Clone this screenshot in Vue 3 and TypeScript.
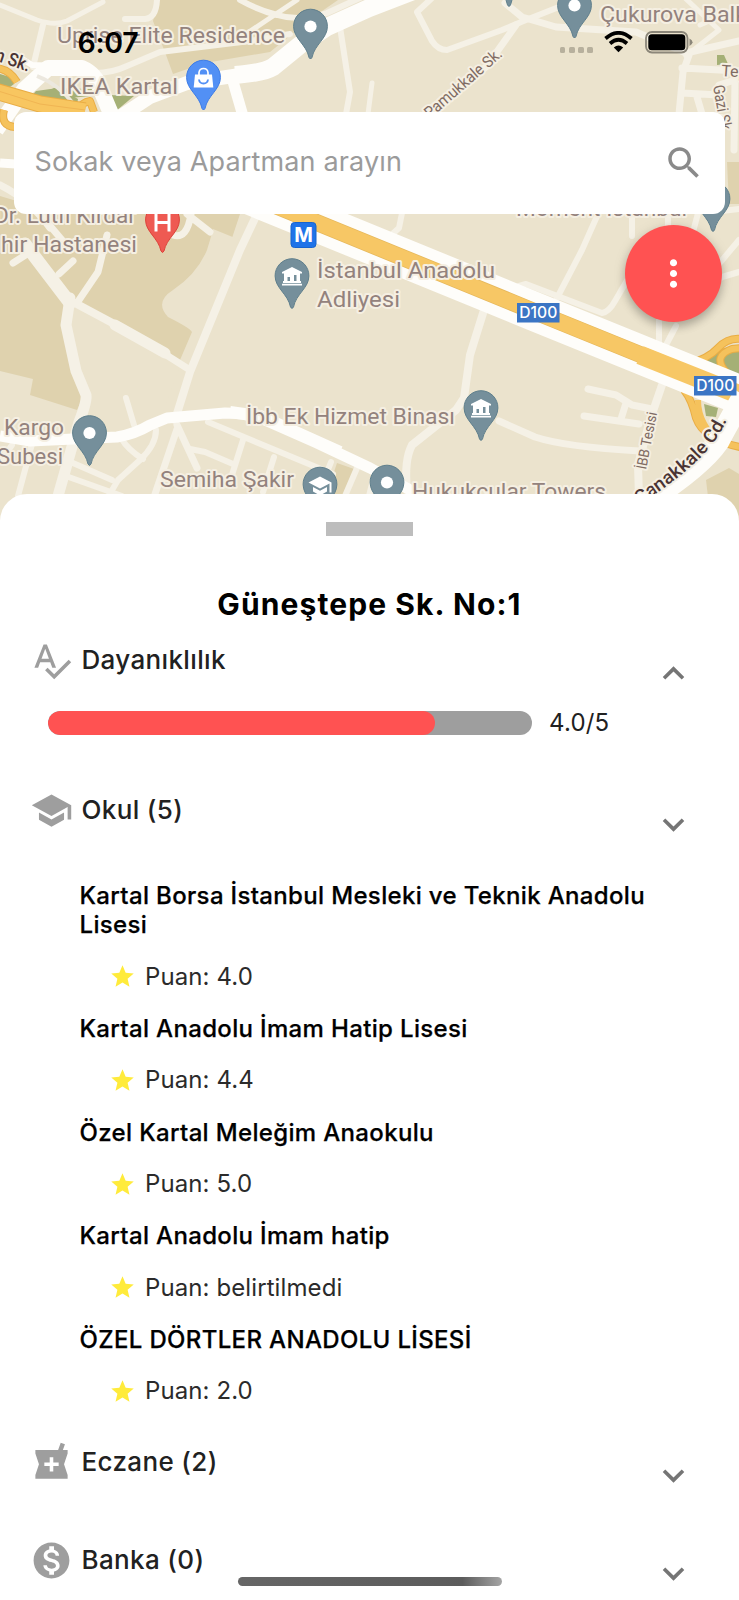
<script setup lang="ts">
interface Pin {
  x: number
  y: number
  kind: 'dot' | 'civic' | 'school' | 'shop' | 'hospital'
}
interface MapLabel {
  text: string
  x: number
  y: number
  width: number
}
interface School {
  name: string
  score: string
}

const localRoads: { d: string; w: number }[] = [
  { d: 'M0 5L37 20Q55 26 67 21L103 2', w: 5 },
  { d: 'M43 25L33 67', w: 6 },
  { d: 'M157 0Q156 18 145 19L125 19', w: 6 },
  { d: 'M95 73Q112 73 127 66L160 52L250 41L290 34', w: 6 },
  { d: 'M240 0Q258 10 277 15Q300 22 327 13L362 -3', w: 6 },
  { d: 'M297 0L267 20L240 38', w: 5 },
  { d: 'M340 27L350 92L346 114', w: 6 },
  { d: 'M372 83L368 114', w: 5 },
  { d: 'M432 -2L417 12L432 41Q438 50 447 50L502 30L526 20L569 3', w: 6 },
  { d: 'M516 25L486 67L426 112', w: 7 },
  { d: 'M505 3L522 17L556 27L636 32L686 53L739 41', w: 7 },
  { d: 'M689 55L683 72L679 114M682 68L739 71M682 93L719 95M697 97L702 114M719 85L735 80L734 150', w: 7 },
  { d: 'M685 -2L719 30L686 56M700 25L739 8', w: 5 },
  { d: 'M402 213L399 228L389 237', w: 6 },
  { d: 'M598 214L582 250L557 298M519 286L526 284L602 313Q609 312 615 301L629 277', w: 6 },
  { d: 'M632 213V236M698 213L692 236M668 213V226', w: 6 },
  { d: 'M659 320V349M676 326L666 345M739 209L722 211', w: 6 },
  { d: 'M715 283L722 277L739 272M718 265L739 240', w: 6 },
  { d: 'M484 310L470 355L464 398L456 410L412 445Q404 460 407 490', w: 8 },
  { d: 'M499 421L535 437Q565 447 640 451', w: 7 },
  { d: 'M588 389L616 395L632 405L652 409M626 403L621 419M584 416L639 424', w: 7 },
  { d: 'M662 385L650 420L638 465L639 497', w: 8 },
  { d: 'M257 214L240 250L190 372L175 420', w: 8 },
  { d: 'M177 425L197 468M177 429L155 494', w: 7 },
  { d: 'M25 244L70 303', w: 13 },
  { d: 'M70 298L66 325L76 371L86 395Q87 402 79 422L58 496', w: 11 },
  { d: 'M75 303L118 326', w: 8 },
  { d: 'M115 325L165 353', w: 11 },
  { d: 'M160 351L190 370', w: 7 },
  { d: 'M107 235L98 272L79 300M59 274L73 261M13 263L27 254', w: 7 },
  { d: 'M126 398L134 425', w: 6 },
  { d: 'M121 438Q128 450 143 459M156 430Q156 445 140 460L118 480L108 497', w: 6 },
  { d: 'M208 422L333 474M190 449L205 452L233 464M243 440L231 478M274 457L263 492M331 462L324 480', w: 6 },
  { d: 'M63 475L122 496M66 460L112 480M32 444L18 496M0 462L12 445', w: 6 },
  { d: 'M0 185Q30 200 50 228M40 214L62 240M187 214L210 232M173 235Q187 240 191 214', w: 7 },
  { d: 'M357 468L345 496M374 476L369 496', w: 6 },
]

const labels: MapLabel[] = [
  { text: 'Uprise Elite Residence', x: 57, y: 43, width: 228 },
  { text: 'IKEA Kartal', x: 60, y: 94, width: 118 },
  { text: 'Dr. Lütfi Kırdar', x: -6, y: 223, width: 142 },
  { text: 'hir Hastanesi', x: 1, y: 252, width: 136 },
  { text: 'Çukurova Balk', x: 600, y: 22, width: 147 },
  { text: 'Moment İstanbul', x: 516, y: 216, width: 171 },
  { text: 'İstanbul Anadolu', x: 317, y: 278.4, width: 178 },
  { text: 'Adliyesi', x: 317, y: 307, width: 83 },
  { text: 'İbb Ek Hizmet Binası', x: 246, y: 424.4, width: 209 },
  { text: 'Kargo', x: 4, y: 435, width: 60 },
  { text: 'Subesi', x: -3, y: 464, width: 66 },
  { text: 'Semiha Şakir', x: 160, y: 487, width: 134 },
  { text: 'Hukukcular Towers', x: 412, y: 499, width: 194 },
]

const pins: Pin[] = [
  { x: 310.5, y: 26.5, kind: 'dot' },
  { x: 203.5, y: 77.5, kind: 'shop' },
  { x: 162.5, y: 220, kind: 'hospital' },
  { x: 509, y: -26, kind: 'dot' },
  { x: 574.5, y: 5.5, kind: 'dot' },
  { x: 713, y: 199, kind: 'dot' },
  { x: 292, y: 276, kind: 'civic' },
  { x: 89.5, y: 433, kind: 'dot' },
  { x: 320, y: 484.5, kind: 'school' },
  { x: 387, y: 482.5, kind: 'dot' },
  { x: 481, y: 408, kind: 'civic' },
]

const pinFill: Record<Pin['kind'], string> = {
  dot: '#758f9b',
  civic: '#758f9b',
  school: '#758f9b',
  shop: '#5290f5',
  hospital: '#ee5a52',
}
const pinEdge: Record<Pin['kind'], string> = {
  dot: '#5f7f8c',
  civic: '#5f7f8c',
  school: '#5f7f8c',
  shop: '#3c7be6',
  hospital: '#dc4239',
}

const shields = [
  { x: 517, y: 303 },
  { x: 694, y: 376 },
]

const schools: School[] = [
  { name: 'Kartal Borsa İstanbul Mesleki ve Teknik Anadolu Lisesi', score: '4.0' },
  { name: 'Kartal Anadolu İmam Hatip Lisesi', score: '4.4' },
  { name: 'Özel Kartal Meleğim Anaokulu', score: '5.0' },
  { name: 'Kartal Anadolu İmam hatip', score: 'belirtilmedi' },
  { name: 'ÖZEL DÖRTLER ANADOLU LİSESİ', score: '2.0' },
]

const durability = { value: 4, max: 5 }
const chevronDown = 'M16.59 8.59L12 13.17 7.41 8.59 6 10l6 6 6-6z'
const chevronUp = 'M12 8l-6 6 1.41 1.41L12 10.83l4.59 4.58L18 14z'
</script>

<template>
  <main class="screen">
    <section class="map">
      <svg class="map-canvas" width="739" height="530" viewBox="0 0 739 530">
        <rect width="739" height="530" fill="#ebe3cd" />
        <g fill="#dfd2ae">
          <path d="M158 0L153 21L166 55L173 74L205 63L270 52L312 18L338 0Z" />
          <path d="M0 196L0 371L33 379L30 395L77 410L84 395L65 330L72 300L180 360L192 332Q190 328 168 317Q154 302 173 290Q197 274 207 250L213 230L232 238L240 214L60 214Z" />
          <path d="M337 463L357 470L345 496L326 496Z" />
          <path d="M706 480L729 468L739 474V530H712Z" />
          <path d="M727 162H739V204H729Z" />
        </g>
        <path fill="#ebe3cd" d="M213 229L240 240L236 262L207 262Z" />
        <path fill="#ebe3cd" d="M72 308L180 366L160 420L86 420L88 392L70 330Z" />
        <g fill="#a5b076">
          <path d="M0 74L10 77L14 84L6 90L0 88Z" />
          <path d="M26 102L36 91L58 88L78 99L76 110L60 110Z" />
          <path d="M52 88L92 89L90 96L70 98Z" />
          <path d="M108 95L134 96L116 111Z" />
          <path d="M717 55L724 55L728 64L717 65Z" />
          <path d="M700 361L722 349L739 345V378Z" />
          <path d="M704 404L718 408L716 417L706 416Z" />
        </g>
        <g fill="none" stroke="#f5f1e6" stroke-linecap="round" stroke-linejoin="round">
          <path v-for="(road, i) in localRoads" :key="i" :d="road.d" :stroke-width="road.w" />
        </g>
        <g fill="none" stroke="#fefdfa" stroke-linejoin="round">
          <path stroke-width="18" d="M416 -10L369 8L327 27L300 45L273 67Q263 73 235 75" />
          <path stroke-width="14" d="M240 75L187 83L150 97L118 118" />
          <path stroke-width="11" d="M232 78L243 116" />
          <path stroke-width="16" d="M-4 130L24 90L48 68L82 68Q96 74 101 90L112 116" />
          <path stroke-width="6" d="M14 54L32 65L60 66" />
          <path stroke-width="9" d="M0 163L16 164" />
          <path stroke-width="11" d="M0 436L30 441L117 437Q135 434 150 425L167 418L225 413Q248 413 267 421L317 443L370 468L414 492" />
          <path stroke-width="12" d="M230 412L260 416L300 434L340 452" />
        </g>
        <path d="M37 76Q60 85 74 105" fill="none" stroke="#ece8df" stroke-width="4" />
        <g fill="none" stroke-linejoin="round">
          <g stroke="#e9ad45">
            <path stroke-width="8" d="M-3 68Q10 70 17 82M4 110Q0 126 15 127M76 112Q82 102 90 101L94 112" />
            <path stroke-width="8" d="M684 390Q692 400 696 418Q704 440 740 447" />
            <path stroke-width="8" d="M688 364Q708 359 718 348T742 339M726 372Q712 356 732 349L742 348" />
          </g>
          <g stroke="#f5c25c">
            <path stroke-width="6" d="M-3 68Q10 70 17 82M4 110Q0 126 15 127M76 112Q82 102 90 101L94 112" />
            <path stroke-width="6" d="M684 390Q692 400 696 418Q704 440 740 447M698 400Q698 425 722 445" />
            <path stroke-width="6" d="M688 364Q708 359 718 348T742 339M726 372Q712 356 732 349L742 348" />
          </g>
          <path stroke="#e9ad45" stroke-width="17" d="M-5 91L40 104L85 111" />
          <path stroke="#f8c660" stroke-width="15" d="M-5 91L40 104L85 111" />
          <path stroke="#f0b553" stroke-width="1" d="M-5 90L40 104L85 110" />
          <path stroke="#fefdfa" stroke-width="39" d="M230 187L538 313L745 397" />
          <path stroke="#e6b85c" stroke-width="17" d="M230 187L538 313L745 397" />
          <path stroke="#f7c765" stroke-width="15.5" d="M230 187L538 313L745 397" />
          <path stroke="#f7c765" stroke-width="19" d="M640 355L745 397" />
        </g>
        <path fill="none" stroke="#fefdfa" stroke-width="22" d="M744 395Q727 425 718 442Q700 468 640 506" />

        <g class="place">
          <text v-for="l in labels" :key="l.text" :x="l.x" :y="l.y" :textLength="l.width" lengthAdjust="spacingAndGlyphs">{{ l.text }}</text>
        </g>
        <g class="street">
          <text transform="translate(430 119) rotate(-41)" textLength="97" lengthAdjust="spacingAndGlyphs">Pamukkale Sk.</text>
          <text transform="translate(721 76) rotate(4)">Tepe</text>
          <text transform="translate(713 86) rotate(80)" textLength="49" lengthAdjust="spacingAndGlyphs">Gazi Sk.</text>
          <text class="small" transform="translate(646 470) rotate(-79)" textLength="58" lengthAdjust="spacingAndGlyphs">İBB Tesisi</text>
          <g class="avenue">
            <text transform="translate(-6 60) rotate(19)" textLength="36" lengthAdjust="spacingAndGlyphs">n Sk.</text>
            <path id="avenue-line" fill="none" stroke="none" d="M639 505Q690 472 710 447Q723 431 731 411" />
            <text><textPath href="#avenue-line" textLength="124" lengthAdjust="spacingAndGlyphs">Çanakkale Cd.</textPath></text>
          </g>
        </g>

        <g v-for="s in shields" :key="s.x" :transform="`translate(${s.x} ${s.y})`">
          <rect width="42.5" height="19.5" fill="#3b75c4" />
          <text class="shield" x="21.3" y="15.3" text-anchor="middle" textLength="38" lengthAdjust="spacingAndGlyphs">D100</text>
        </g>
        <g transform="translate(290.5 222)">
          <rect x=".5" y=".5" width="25" height="25" rx="3.5" fill="#1f73e8" stroke="#1764cf" />
          <text class="metro" x="13" y="20" text-anchor="middle">M</text>
        </g>

        <g v-for="p in pins" :key="`${p.x}-${p.y}`" :transform="`translate(${p.x} ${p.y})`">
          <path :fill="pinFill[p.kind]" :stroke="pinEdge[p.kind]" stroke-width="1" d="M0 -17.3A17 17 0 0 1 16.9 0C16.9 12 4 18 1.5 31Q0 34 -1.5 31C-4 18 -16.9 12 -16.9 0A17 17 0 0 1 0 -17.3Z" />
          <circle v-if="p.kind === 'dot'" r="6.1" fill="#fff" />
          <path v-else-if="p.kind === 'civic'" fill="#fff" d="M-10 -4L0 -9L10 -4V-2.5H8V5H9V7H-9V5H-8V-2.5H-10ZM-4.5 -1V5H-2V1H-4.5ZM2 1V5H4.5V-1H2ZM-10 7.7H10V9.5H-10Z" fill-rule="evenodd" />
          <path v-else-if="p.kind === 'school'" fill="#fff" d="M0 -8L11.5 -2V8H9.5V-1L0 4L-11.5 -2ZM-7 2.5L0 6.2L7 2.5V7L0 11L-7 7Z" />
          <g v-else-if="p.kind === 'shop'">
            <path fill="#fff" d="M-8.5 -3H8.5L9.8 10H-9.8Z" />
            <path fill="none" stroke="#fff" stroke-width="1.7" d="M-4.5 -2V-5Q-4 -9 0 -9T4.5 -5V-2" />
            <path fill="none" stroke="#5290f5" stroke-width="1.9" d="M-4.5 2Q-4 6 0 6T4.5 2" />
          </g>
          <path v-else fill="none" stroke="#fff" stroke-width="3" d="M-6.5 -6.5V11.5M6.5 -6.5V11.5M-6.5 2.5H6.5" />
        </g>
      </svg>

      <div class="overlay">
        <header class="status">
          <span class="clock">6:07</span>
          <span class="signal"><i v-for="n in 4" :key="n" /></span>
          <svg class="wifi" width="29" height="22" viewBox="0 0 29 22">
            <g fill="none" stroke="#000" stroke-width="3.7">
              <path d="M1.5 7.5Q14.5 -3.8 27.5 7.5" />
              <path d="M6 12.5Q14.5 5 23 12.5" />
            </g>
            <path d="M9.8 16.6Q14.5 12.6 19.2 16.6L14.5 21.3Z" />
          </svg>
          <svg class="battery" width="48" height="23" viewBox="0 0 48 23">
            <rect x="1" y="1" width="41.5" height="20.5" rx="6" fill="none" stroke="#8b8679" stroke-width="1.8" />
            <rect x="3.3" y="3.3" width="37" height="16" rx="3.5" />
            <path d="M44.5 7.5Q47.5 9 47.5 11.3T44.5 15Z" fill="#8b8679" />
          </svg>
        </header>

        <div class="search">
          <span>Sokak veya Apartman arayın</span>
          <svg width="42" height="42" viewBox="0 0 24 24" fill="#8a8a8a"><path d="M15.5 14h-.79l-.28-.27C15.41 12.59 16 11.11 16 9.5 16 5.91 13.09 3 9.5 3S3 5.91 3 9.5 5.91 16 9.5 16c1.61 0 3.09-.59 4.23-1.57l.27.28v.79l5 4.99L20.49 19l-4.99-5zm-6 0C7.01 14 5 11.99 5 9.5S7.01 5 9.5 5 14 7.01 14 9.5 11.99 14 9.5 14z" /></svg>
        </div>

        <button class="fab" aria-label="Menü">
          <svg width="43" height="43" viewBox="0 0 24 24" fill="#fff"><path d="M12 8c1.1 0 2-.9 2-2s-.9-2-2-2-2 .9-2 2 .9 2 2 2zm0 2c-1.1 0-2 .9-2 2s.9 2 2 2 2-.9 2-2-.9-2-2-2zm0 6c-1.1 0-2 .9-2 2s.9 2 2 2 2-.9 2-2-.9-2-2-2z" /></svg>
        </button>
      </div>
    </section>

    <section class="sheet">
      <div class="handle" />
      <h1>Güneştepe Sk. No:1</h1>

      <div class="row">
        <svg class="icon" viewBox="0 0 24 24"><path d="M12.45 16h2.09L9.43 3H7.57L2.46 16h2.09l1.12-3h5.64l1.14 3zm-6.02-5L8.5 5.48 10.57 11H6.43zm15.16.59l-8.09 8.09L9.83 16l-1.41 1.41 5.09 5.09L23 13l-1.41-1.41z" /></svg>
        <h2>Dayanıklılık</h2>
        <svg class="chevron" viewBox="0 0 24 24"><path :d="chevronUp" /></svg>
      </div>
      <div class="meter-line">
        <div class="meter"><div class="fill" :style="{ width: `${(durability.value / durability.max) * 100}%` }" /></div>
        <span>{{ durability.value.toFixed(1) }}/{{ durability.max }}</span>
      </div>

      <div class="row school-row">
        <svg class="icon" viewBox="0 0 24 24"><path d="M5 13.18v4L12 21l7-3.82v-4L12 17l-7-3.82zM12 3L1 9l11 6 9-4.91V17h2V9L12 3z" /></svg>
        <h2>Okul (5)</h2>
        <svg class="chevron" viewBox="0 0 24 24"><path :d="chevronDown" /></svg>
      </div>
      <ul class="schools">
        <li v-for="s in schools" :key="s.name">
          <h3>{{ s.name }}</h3>
          <p>
            <svg width="27" height="27" viewBox="0 0 24 24" fill="#ffeb3b"><path d="M12 17.27L18.18 21l-1.64-7.03L22 9.24l-7.19-.61L12 2 9.19 8.63 2 9.24l5.46 4.73L5.82 21z" /></svg>
            <span>Puan: {{ s.score }}</span>
          </p>
        </li>
      </ul>

      <div class="row pharmacy-row">
        <svg class="icon" viewBox="0 0 24 24"><path d="M21 5h-2.64l1.14-3.14L17.15 1l-1.46 4H3v2l2 6-2 6v2h18v-2l-2-6 2-6V5zm-5 9h-3v3h-2v-3H8v-2h3V9h2v3h3v2z" /></svg>
        <h2>Eczane (2)</h2>
        <svg class="chevron" viewBox="0 0 24 24"><path :d="chevronDown" /></svg>
      </div>
      <div class="row bank-row">
        <svg class="icon" viewBox="0 0 24 24"><path d="M12 2C6.48 2 2 6.48 2 12s4.48 10 10 10 10-4.48 10-10S17.52 2 12 2zm1.41 16.09V20h-2.67v-1.93c-1.71-.36-3.16-1.46-3.27-3.4h1.96c.1 1.05.82 1.87 2.65 1.87 1.96 0 2.4-.98 2.4-1.59 0-.83-.44-1.61-2.67-2.14-2.48-.6-4.18-1.62-4.18-3.67 0-1.72 1.39-2.84 3.11-3.21V4h2.67v1.95c1.86.45 2.79 1.86 2.85 3.39H14.3c-.05-1.11-.64-1.87-2.22-1.87-1.5 0-2.4.68-2.4 1.64 0 .84.65 1.39 2.67 1.91s4.18 1.39 4.18 3.91c-.01 1.83-1.38 2.83-3.12 3.16z" /></svg>
        <h2>Banka (0)</h2>
        <svg class="chevron" viewBox="0 0 24 24"><path :d="chevronDown" /></svg>
      </div>
      <div class="home-bar" />
    </section>
  </main>
</template>

<style>
body {
  margin: 0;
  background: #fff;
}
</style>

<style scoped>
.screen {
  position: relative;
  width: 739px;
  height: 1600px;
  overflow: hidden;
  font-family: Inter, 'Liberation Sans', sans-serif;
  color: #212121;
}
.map {
  display: grid;
  height: 530px;
}
.map-canvas,
.overlay {
  grid-area: 1 / 1;
}
.map-canvas {
  display: block;
}
.overlay {
  z-index: 1;
  display: flex;
  flex-direction: column;
}
.place text,
.street text {
  font-family: Roboto, sans-serif;
  font-size: 22.5px;
  fill: #93827d;
  stroke: #f5efe2;
  stroke-width: 4px;
  stroke-linejoin: round;
  paint-order: stroke;
}
.street text {
  font-size: 16px;
  fill: #806b63;
}
.street .small {
  font-size: 14.5px;
}
.street .avenue text {
  font-size: 18.5px;
  font-weight: 500;
  fill: #4a3434;
}
.shield {
  font: 500 16px Inter, sans-serif;
  fill: #fff;
}
.metro {
  font: 700 20px Inter, sans-serif;
  fill: #fff;
}
.status {
  display: flex;
  height: 112px;
  align-items: flex-start;
}
.clock {
  width: 68px;
  margin: 24.5px 0 0 77.5px;
  color: #000;
  font-size: 28.5px;
  font-weight: 600;
  line-height: 36px;
  letter-spacing: -0.3px;
}
.signal {
  display: flex;
  gap: 3.5px;
  margin: 47px 0 0 414px;
}
.signal i {
  width: 5.8px;
  height: 5.5px;
  border-radius: 1.5px;
  background: #b7b09d;
}
.wifi {
  margin: 31px 0 0 11px;
}
.battery {
  margin: 30.5px 0 0 11.5px;
}
.search {
  display: flex;
  box-sizing: border-box;
  width: 711px;
  height: 102px;
  margin-left: 14px;
  padding: 0 20px 0 20.5px;
  align-items: center;
  justify-content: space-between;
  border-radius: 12px;
  background: #fff;
  color: #9b9b9b;
  font-size: 27px;
  line-height: 36px;
  letter-spacing: 0.15px;
}
.search span {
  padding-bottom: 2px;
}
.fab {
  display: flex;
  width: 97px;
  height: 97px;
  margin: 10.5px 0 0 625px;
  padding: 0;
  align-items: center;
  justify-content: center;
  border: 0;
  border-radius: 50%;
  background: #ff5252;
  box-shadow: 0 5px 9px rgba(0, 0, 0, 0.22), 0 2px 14px rgba(0, 0, 0, 0.1);
}
.sheet {
  position: relative;
  z-index: 2;
  height: 1106px;
  margin-top: -36px;
  border-radius: 27px 27px 0 0;
  background: #fff;
  display: flow-root;
}
.handle {
  width: 87px;
  height: 14px;
  margin: 28px auto 0;
  background: #bdbdbd;
}
h1 {
  margin: 50px 0 0;
  color: #000;
  font-size: 30px;
  font-weight: 700;
  line-height: 36px;
  letter-spacing: 1.1px;
  text-align: center;
}
.row {
  display: flex;
  height: 57px;
  margin: 16px 44px 0 30px;
}
.icon {
  width: 43px;
  height: 43px;
  margin-top: 1px;
  fill: #9e9e9e;
}
h2 {
  flex: 1;
  margin: 0 0 0 8.5px;
  color: #212121;
  font-size: 26px;
  font-weight: 500;
  line-height: 43px;
  letter-spacing: 0.35px;
}
.chevron {
  width: 43px;
  height: 43px;
  margin-top: 14px;
  fill: #757575;
}
.meter-line {
  display: flex;
  height: 24px;
  margin: 16px 0 0 48px;
  align-items: center;
  gap: 17px;
  font-size: 24px;
  line-height: 26px;
  letter-spacing: 0.2px;
}
.meter-line span {
  padding-bottom: 1px;
}
.meter {
  width: 484px;
  height: 24px;
  border-radius: 12px;
  background: #9e9e9e;
  overflow: hidden;
}
.fill {
  height: 100%;
  border-radius: 12px;
  background: #ff5252;
}
.school-row {
  margin-top: 53px;
}
.school-row .chevron {
  margin-top: 14.5px;
}
.schools {
  display: flex;
  flex-direction: column;
  gap: 23.2px;
  margin: 36px 0 0 79.5px;
  padding: 0;
  list-style: none;
}
.schools li {
  display: flex;
  flex-direction: column;
  gap: 23.2px;
}
h3 {
  width: 600px;
  margin: 0;
  color: #000;
  font-size: 24px;
  font-weight: 500;
  line-height: 29.3px;
  letter-spacing: 0.34px;
  -webkit-text-stroke: 0.25px #000;
}
p {
  display: flex;
  height: 28px;
  margin: 0 0 0 29.5px;
  align-items: center;
  gap: 9px;
  color: #2b2b2b;
  font-size: 24px;
  line-height: 28px;
  letter-spacing: 0.1px;
}
.pharmacy-row {
  margin-top: 34.5px;
}
.bank-row {
  margin-top: 41.5px;
}
.home-bar {
  position: absolute;
  left: 238px;
  bottom: 14px;
  width: 264px;
  height: 9px;
  border-radius: 5px;
  background: linear-gradient(90deg, #666 0%, #5c5c5c 85%, #a5a5a5 100%);
}
</style>
